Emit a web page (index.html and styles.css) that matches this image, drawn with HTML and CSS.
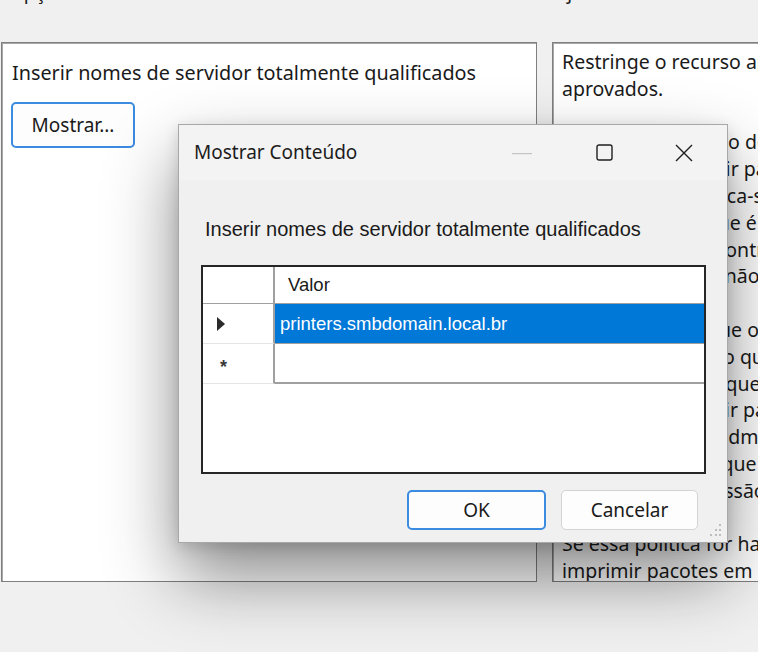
FILE: index.html
```html
<!DOCTYPE html>
<html lang="pt-BR">
<head>
<meta charset="utf-8">
<title>Mostrar Conteúdo</title>
<link rel="stylesheet" href="styles.css">
</head>
<body>
<div class="labels">
  <span class="lbl lbl-left">Opções:</span>
  <span class="lbl lbl-right">Ajuda:</span>
</div>
<div class="panes">
  <div class="pane pane-left">
    <div class="pane-text">Inserir nomes de servidor totalmente qualificados</div>
    <button class="win-btn show-btn">Mostrar...</button>
  </div>
  <div class="pane pane-right">
    <div class="help">
      <div class="hl">Restringe o recurso apontar e imprimir do pacote a servidores</div>
      <div class="hl">aprovados.</div>
      <div class="hl">&nbsp;</div>
      <div class="hl">Nesta configuração de política, o recurso</div>
      <div class="hl">Apontar e Imprimir pacotes é restrito</div>
      <div class="hl">de regras que aplica-se a</div>
      <div class="hl">para o servidor que é confiável</div>
      <div class="hl">de impressões e controle</div>
      <div class="hl">impressoras, que não</div>
      <div class="hl">&nbsp;</div>
      <div class="hl">Isso só garante que os</div>
      <div class="hl">a clientes de modo que</div>
      <div class="hl">só aos servidores que hospedam</div>
      <div class="hl">só podem imprimir pacotes</div>
      <div class="hl">aprovados pelos administradores</div>
      <div class="hl">às configurações que</div>
      <div class="hl">servidor de impressão</div>
      <div class="hl">&nbsp;</div>
      <div class="hl">Se essa política for habilitada, os clientes só poderão</div>
      <div class="hl">imprimir pacotes em servidores aprovados.</div>
    </div>
  </div>
</div>

<div class="dialog">
  <div class="titlebar">
    <span class="title">Mostrar Conteúdo</span>
    <div class="caption">
      <span class="cap cap-min"><svg width="20" height="2" viewBox="0 0 20 2"><rect x="0" y="0" width="20" height="1.2" fill="#c4c4c4"/></svg></span>
      <span class="cap cap-max"><svg width="17" height="17" viewBox="0 0 17 17"><rect x="1" y="1" width="15" height="15" rx="2" fill="none" stroke="#1f1f1f" stroke-width="1.4"/></svg></span>
      <span class="cap cap-close"><svg width="18" height="18" viewBox="0 0 18 18"><path d="M1 1 L17 17 M17 1 L1 17" stroke="#1f1f1f" stroke-width="1.4" fill="none"/></svg></span>
    </div>
  </div>
  <div class="dbody">
    <div class="dlabel">Inserir nomes de servidor totalmente qualificados</div>
    <div class="grid">
      <div class="grow ghead">
        <div class="rh"></div>
        <div class="cell hcell">Valor</div>
      </div>
      <div class="grow gsel">
        <div class="rh rh-mid"><svg width="10" height="14" viewBox="0 0 10 14"><path d="M1 0 L9 7 L1 14 Z" fill="#2b2b2b"/></svg></div>
        <div class="cell selcell">printers.smbdomain.local.br</div>
      </div>
      <div class="grow gnew">
        <div class="rh rh-new">*</div>
        <div class="cell newcell"></div>
      </div>
    </div>
    <div class="actions">
      <button class="win-btn ok-btn">OK</button>
      <button class="win-btn cancel-btn">Cancelar</button>
    </div>
  </div>
  <svg class="grip" width="16" height="16" viewBox="0 0 16 16">
    <rect x="12" y="2" width="2" height="2" fill="#bdbdbd"/>
    <rect x="8" y="7" width="2" height="2" fill="#bdbdbd"/>
    <rect x="12" y="7" width="2" height="2" fill="#bdbdbd"/>
    <rect x="3" y="12" width="2" height="2" fill="#bdbdbd"/>
    <rect x="8" y="12" width="2" height="2" fill="#bdbdbd"/>
    <rect x="12" y="12" width="2" height="2" fill="#bdbdbd"/>
  </svg>
</div>
</body>
</html>
```

FILE: styles.css
```css
html, body {
  margin: 0;
  padding: 0;
  width: 758px;
  height: 652px;
  overflow: hidden;
  background: #f0f0f0;
  font-family: "Noto Sans", "Open Sans", sans-serif;
  color: #1a1a1a;
}

.labels {
  height: 42px;
  display: flex;
  font-size: 19px;
  line-height: 20px;
  overflow: hidden;
}
.lbl {
  margin-top: -18px;
}
.lbl-left {
  margin-left: 9px;
  width: 546px;
  flex: none;
}

.panes {
  display: flex;
  gap: 15px;
  padding-left: 1px;
  height: 540px;
  overflow: hidden;
}
.pane {
  background: #fff;
  border: 1px solid #7f7f7f;
  box-shadow: inset 1px 1px 0 #a8a8a8;
  box-sizing: border-box;
  height: 540px;
  overflow: hidden;
  flex: none;
}
.pane-left {
  width: 536px;
  padding: 17px 0 0 10px;
}
.pane-right {
  width: 240px;
  padding: 6px 0 0 9px;
}
.pane-text {
  font-size: 19.8px;
  line-height: 26px;
}
.show-btn {
  margin-top: 16px;
  margin-left: -1px;
  width: 124px;
  height: 46px;
  border: 2px solid #3b8be0;
}

.win-btn {
  font-family: "Noto Sans", "Open Sans", sans-serif;
  font-size: 19px;
  color: #1a1a1a;
  background: #fdfdfd;
  border-radius: 5px;
  box-sizing: border-box;
  padding: 0;
}

.help {
  font-size: 19.5px;
  line-height: 26.8px;
  white-space: nowrap;
}

.dialog {
  position: absolute;
  left: 178px;
  top: 124px;
  width: 550px;
  height: 419px;
  box-sizing: border-box;
  background: #f0f0f0;
  border: 1px solid #a8a8a8;
  box-shadow: 0 34px 66px rgba(0, 0, 0, 0.46), 0 4px 14px rgba(0, 0, 0, 0.14);
  display: flex;
  flex-direction: column;
}
.titlebar {
  height: 55px;
  background: #f3f3f3;
  display: flex;
  align-items: center;
  padding-left: 15px;
  flex: none;
}
.title {
  font-size: 19px;
  color: #1c1c1c;
  flex: 1;
  margin-top: -2px;
}
.caption {
  display: flex;
  align-self: stretch;
  margin-right: 3px;
}
.cap {
  display: flex;
  align-items: center;
  justify-content: center;
  width: 80px;
}
.cap-min {
  width: 84px;
  padding-top: 3px;
}
.cap svg {
  display: block;
}

.dbody {
  padding: 0 21px 0 22px;
  flex: 1;
  display: flex;
  flex-direction: column;
}
.dlabel {
  font-family: "Liberation Sans", Arial, sans-serif;
  font-size: 20px;
  line-height: 24px;
  margin-top: 37px;
  margin-left: 4px;
  color: #1a1a1a;
}
.grid {
  margin-top: 24px;
  height: 209px;
  box-sizing: border-box;
  background: #fff;
  border: 2px solid #262626;
  font-family: "Liberation Sans", Arial, sans-serif;
  font-size: 18.5px;
}
.grow {
  display: flex;
  box-sizing: border-box;
}
.ghead {
  height: 37px;
  border-bottom: 1px solid #a0a0a0;
}
.gsel {
  height: 40px;
}
.gnew {
  height: 40px;
}
.rh {
  width: 72px;
  flex: none;
  border-right: 2px solid #a0a0a0;
  box-sizing: border-box;
  display: flex;
  align-items: center;
}
.rh-mid {
  padding-left: 13px;
  border-bottom: 1px solid #e4e4e4;
}
.rh-new {
  padding-left: 17px;
  font-weight: bold;
  font-size: 18px;
  color: #3a3a3a;
  padding-top: 8px;
  border-bottom: 1px solid #e4e4e4;
}
.cell {
  flex: 1;
  display: flex;
  align-items: center;
  box-sizing: border-box;
}
.hcell {
  padding-left: 13px;
  color: #1a1a1a;
}
.selcell {
  background: #0078d7;
  color: #fff;
  padding-left: 5px;
  border-bottom: 1px solid #a0a0a0;
}
.newcell {
  border-bottom: 2px solid #a0a0a0;
}

.actions {
  display: flex;
  justify-content: flex-end;
  gap: 15px;
  margin-top: 16px;
  margin-right: 8px;
}
.ok-btn {
  width: 139px;
  height: 40px;
  border: 2px solid #3b8be0;
}
.cancel-btn {
  width: 137px;
  height: 40px;
  border: 1px solid #d3d3d3;
}

.grip {
  position: absolute;
  right: 4px;
  bottom: 4px;
}
```
